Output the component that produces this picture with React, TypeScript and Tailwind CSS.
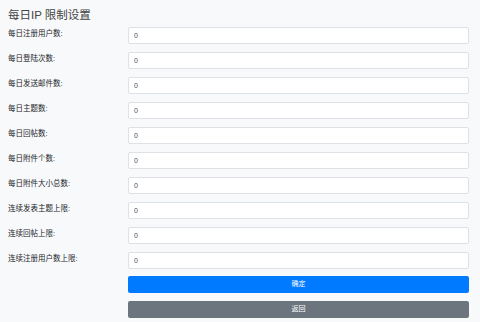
export default function App() {
  const fields = [
    "每日注册用户数:",
    "每日登陆次数:",
    "每日发送邮件数:",
    "每日主题数:",
    "每日回帖数:",
    "每日附件个数:",
    "每日附件大小总数:",
    "连续发表主题上限:",
    "连续回帖上限:",
    "连续注册用户数上限:",
  ];

  return (
    <main
      className="w-[480px] h-[322px] bg-[#f8f9fa] text-[#212529] overflow-hidden"
      style={{ fontFamily: '"Liberation Sans", "Noto Sans CJK SC", sans-serif' }}
    >
      <div className="pl-2 pr-[11px]">
        <h1 className="text-[11.5px] leading-none pt-[10px] h-[27px] text-[#444]">每日IP 限制设置</h1>

        {/* ---------- form rows ---------- */}
        <div className="flex flex-col gap-2">
          {fields.map((label) => (
            <div key={label} className="flex">
              <label className="w-[120px] text-[7.5px] leading-none pt-[3px]">{label}</label>
              <input
                readOnly
                value="0"
                className="flex-1 h-[17px] px-[5px] text-[7px] text-[#495057] bg-white border border-[#dee2e6] rounded-[2px] outline-none"
              />
            </div>
          ))}
        </div>

        {/* ---------- buttons ---------- */}
        <div className="ml-[120px] mt-[7px] flex flex-col gap-2">
          <button className="h-[17px] bg-[#007bff] text-white text-[7px] rounded-[2px]">确定</button>
          <button className="h-[17px] bg-[#6c757d] text-white text-[7px] rounded-[2px]">返回</button>
        </div>
      </div>
    </main>
  );
}
